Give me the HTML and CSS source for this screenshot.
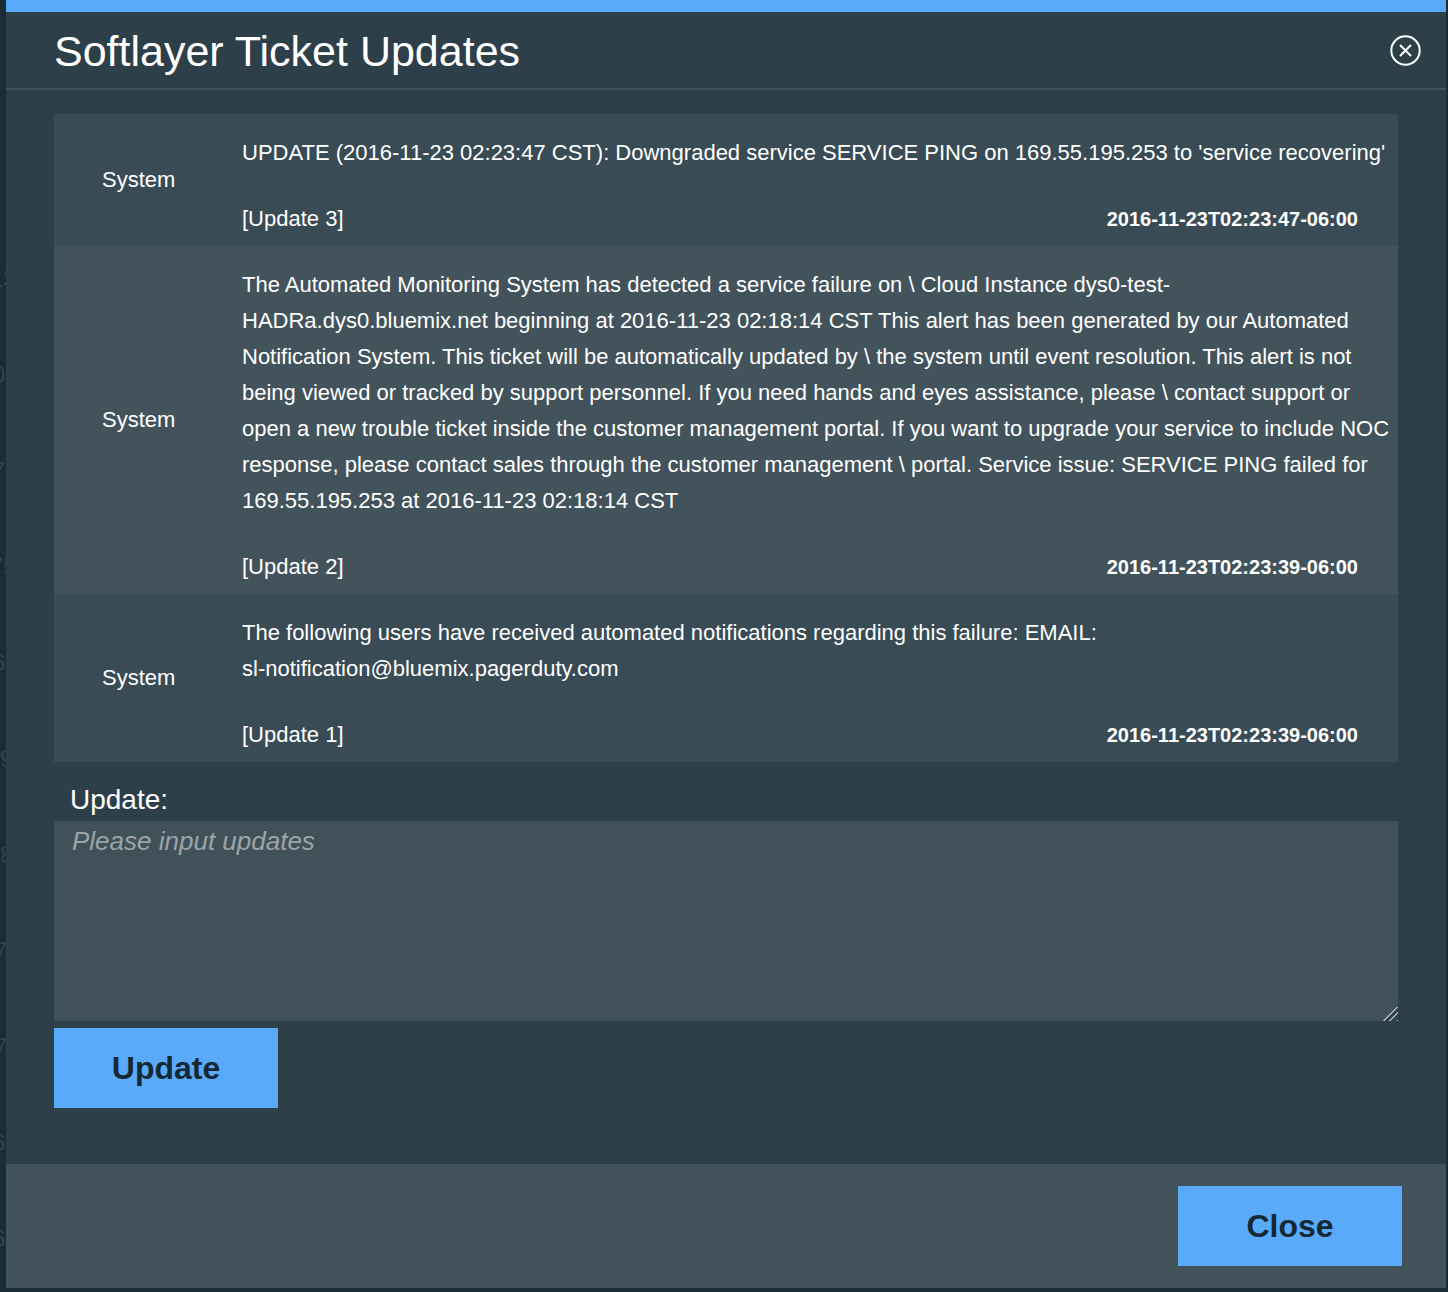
FILE: index.html
```html
<!DOCTYPE html>
<html lang="en">
<head>
<meta charset="utf-8">
<meta name="viewport" content="width=device-width, initial-scale=1">
<title>Softlayer Ticket Updates</title>
<link rel="stylesheet" href="styles.css">
</head>
<body>
<div class="backdrop" aria-hidden="true">
  <span class="two-digit">13</span><span class="ends">0</span><span class="ends">7</span><span class="two-digit">75</span><span class="ends">6</span><span>9</span><span>8</span><span class="mid">7</span><span class="mid">7</span><span class="ends">6</span><span class="ends">6</span>
</div>
<main class="modal" role="dialog" aria-labelledby="modal-title">
  <header class="modal-header">
    <h1 id="modal-title" class="modal-title">Softlayer Ticket Updates</h1>
    <button class="dismiss" type="button" aria-label="Dismiss">
      <svg width="32" height="32" viewBox="0 0 32 32" fill="none" stroke="currentColor" stroke-width="2">
        <circle cx="15.5" cy="15.5" r="14.2"/>
        <path d="M10 10l11 11M21 10L10 21"/>
      </svg>
    </button>
  </header>
  <section class="modal-body">
    <table class="updates">
      <tbody>
        <tr>
          <th scope="row">System</th>
          <td>
            <p class="message">UPDATE (2016-11-23 02:23:47 CST): Downgraded service SERVICE PING on 169.55.195.253 to 'service recovering'</p>
            <div class="meta"><span>[Update 3]</span><time>2016-11-23T02:23:47-06:00</time></div>
          </td>
        </tr>
        <tr>
          <th scope="row">System</th>
          <td>
            <p class="message">The Automated Monitoring System has detected a service failure on \ Cloud Instance dys0-test-HADRa.dys0.bluemix.net beginning at 2016-11-23 02:18:14 CST This alert has been generated by our Automated Notification System. This ticket will be automatically updated by \ the system until event resolution. This alert is not being viewed or tracked by support personnel. If you need hands and eyes assistance, please \ contact support or open a new trouble ticket inside the customer management portal. If you want to upgrade your service to include NOC response, please contact sales through the customer management \ portal. Service issue: SERVICE PING failed for 169.55.195.253 at 2016-11-23 02:18:14 CST</p>
            <div class="meta"><span>[Update 2]</span><time>2016-11-23T02:23:39-06:00</time></div>
          </td>
        </tr>
        <tr>
          <th scope="row">System</th>
          <td>
            <p class="message">The following users have received automated notifications regarding this failure: EMAIL: <span class="email">sl-notification@bluemix.pagerduty.com</span></p>
            <div class="meta"><span>[Update 1]</span><time>2016-11-23T02:23:39-06:00</time></div>
          </td>
        </tr>
      </tbody>
    </table>
    <form class="update-form">
      <label for="update-text">Update:</label>
      <textarea id="update-text" placeholder="Please input updates"></textarea>
      <button class="button" type="button">Update</button>
    </form>
  </section>
  <footer class="modal-footer">
    <button class="button" type="button">Close</button>
  </footer>
</main>
</body>
</html>
```
FILE: styles.css
```css
* {
  box-sizing: border-box;
}

body {
  margin: 0;
  background: #1a2c36;
  color: #fff;
  font: 22px/36px "Liberation Sans", Arial, sans-serif;
}

/* Page content that shows beside the modal's left edge */
.backdrop {
  position: absolute;
  top: 261px;
  left: 0;
  display: flex;
  flex-direction: column;
  gap: 60px;
  width: 12px;
  color: #2f444f;
  font-size: 24px;
}

.backdrop .ends {
  margin-left: -8px;
}

.backdrop .mid {
  margin-left: -6px;
}

.backdrop .two-digit {
  margin-left: -10px;
}

.modal {
  position: relative;
  margin: 0 2px 4px 6px;
  border-top: 12px solid #5aaafa;
  background: #2d3f49;
}

.modal-header {
  display: flex;
  align-items: center;
  justify-content: space-between;
  padding: 11px 24px 9px 48px;
  border-bottom: 2px solid #42535c;
}

.modal-title {
  margin: 0;
  font-size: 43px;
  font-weight: 400;
  line-height: 56px;
}

.dismiss {
  display: flex;
  padding: 0;
  border: 0;
  background: none;
  color: #fff;
  cursor: pointer;
}

.modal-body {
  padding: 24px 48px 56px;
}

.updates {
  width: 100%;
  border-collapse: collapse;
}

.updates tr {
  background: #394b54;
}

.updates tr:nth-child(even) {
  background: #43535b;
}

.updates th {
  width: 188px;
  padding: 0 0 0 48px;
  font-weight: 400;
  text-align: left;
}

.updates td {
  padding: 21px 4px 9px 0;
}

.message {
  margin: 0 0 30px;
}

.email {
  white-space: nowrap;
}

.meta {
  display: flex;
  justify-content: space-between;
  padding-right: 36px;
}

.meta time {
  font-size: 20px;
  font-weight: 700;
}

.update-form {
  display: flex;
  flex-direction: column;
  align-items: flex-start;
  padding-top: 20px;
}

.update-form label {
  margin-bottom: 3px;
  padding-left: 16px;
  font-size: 28px;
}

.update-form textarea {
  width: 100%;
  height: 200px;
  margin-bottom: 7px;
  padding: 2px 18px;
  border: 0;
  border-radius: 0;
  background: #40515a;
  color: #fff;
  font: 26px/36px "Liberation Sans", Arial, sans-serif;
  resize: vertical;
}

.update-form textarea::placeholder {
  color: #9ca4a8;
  font-style: italic;
}

.update-form textarea::-webkit-resizer {
  background: linear-gradient(135deg, transparent 50%, #a9b1b5 50%, #a9b1b5 56%, #35434b 56%, #35434b 70%, #a9b1b5 70%, #a9b1b5 76%, #35434b 76%, #35434b 94%, #a9b1b5 94%);
}

.button {
  width: 224px;
  height: 80px;
  padding: 0;
  border: 0;
  background: #5aaafa;
  color: #152935;
  font: 700 32px/36px "Liberation Sans", Arial, sans-serif;
  cursor: pointer;
}

.modal-footer {
  display: flex;
  justify-content: flex-end;
  padding: 22px 44px;
  background: #43535b;
}
```
